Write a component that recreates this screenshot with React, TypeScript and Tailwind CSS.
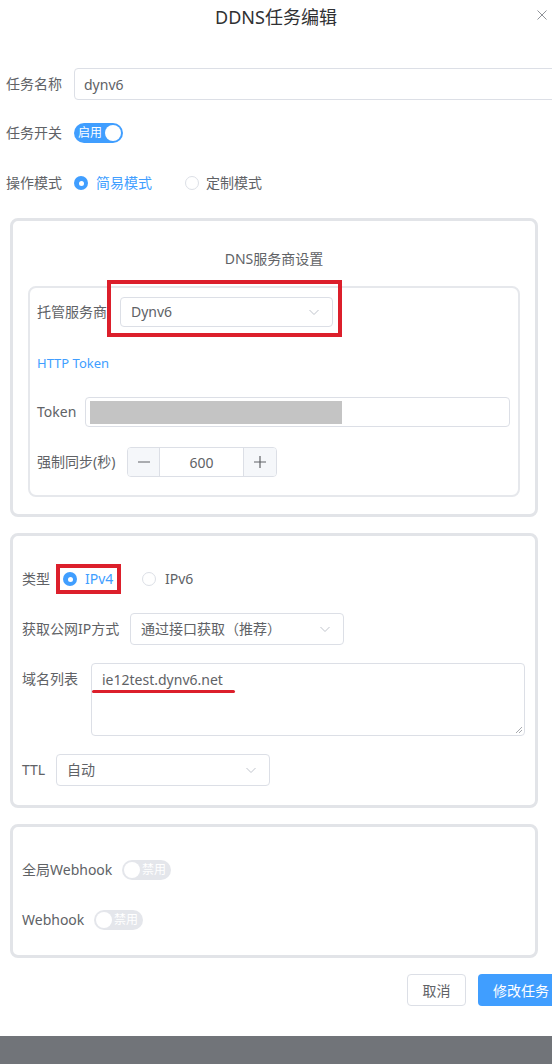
import React from "react";

const Chevron = () => (
  <svg width="12" height="12" viewBox="0 0 12 12" className="flex-none">
    <polyline points="1.5,4 6,8.5 10.5,4" fill="none" stroke="#c0c4cc" strokeWidth="1" />
  </svg>
);

const Radio = ({ checked }: { checked?: boolean }) =>
  checked ? (
    <span className="flex h-[14px] w-[14px] flex-none items-center justify-center rounded-full bg-[#409eff]">
      <span className="block h-[5px] w-[5px] rounded-full bg-white" />
    </span>
  ) : (
    <span className="block h-[14px] w-[14px] flex-none rounded-full border border-[#dcdfe6] bg-white" />
  );

const Toggle = ({ on, text }: { on?: boolean; text: string }) =>
  on ? (
    <span className="flex h-[20px] w-[49px] flex-none items-center justify-between rounded-full bg-[#409eff] pl-[4px] pr-[2px]">
      <span className="text-[12px] leading-[20px] text-white">{text}</span>
      <span className="block h-[16px] w-[16px] rounded-full bg-white" />
    </span>
  ) : (
    <span className="flex h-[20px] w-[49px] flex-none items-center justify-between rounded-full bg-[#e4e6eb] pl-[2px] pr-[5px]">
      <span className="block h-[16px] w-[16px] rounded-full bg-white" />
      <span className="text-[12px] leading-[20px] text-white">{text}</span>
    </span>
  );

const Select = ({ text, w, h = 32 }: { text: string; w: string; h?: number }) => (
  <div
    className={`flex flex-none items-center justify-between rounded-[4px] border border-[#dcdfe6] bg-white pl-[10px] pr-[12px] text-[14px] text-[#606266] ${w} ${
      h === 30 ? "h-[30px]" : "h-[32px]"
    }`}
  >
    <span className="leading-[20px]">{text}</span>
    <Chevron />
  </div>
);

export default function App() {
  return (
    <div className="flex h-[1064px] w-[552px] flex-col overflow-hidden bg-white font-['Noto_Sans','Noto_Sans_CJK_SC',sans-serif] text-[#606266]">
      {/* header */}
      <div className="grid h-[36px] grid-cols-[40px_1fr_40px]">
        <div />
        <div className="pt-[5px] text-center text-[18px] leading-[24px] text-[#303133]">DDNS任务编辑</div>
        <div className="pl-[25px] pt-[10px]">
          <svg width="10" height="10" viewBox="0 0 10 10">
            <path d="M0.5 0.5 L9.5 9.5 M9.5 0.5 L0.5 9.5" stroke="#909399" strokeWidth="1" />
          </svg>
        </div>
      </div>

      {/* top form */}
      <div className="flex flex-col pl-[6px]">
        <div className="mt-[32px] flex h-[32px] items-center">
          <span className="w-[68px] flex-none text-[14px] leading-[20px]">任务名称</span>
          <div className="flex h-[32px] w-[560px] flex-none items-center rounded-[4px] border border-[#dcdfe6] pl-[9px] text-[14px]">
            dynv6
          </div>
        </div>
        <div className="mt-[17px] flex h-[32px] items-center">
          <span className="w-[68px] flex-none text-[14px] leading-[20px]">任务开关</span>
          <Toggle on text="启用" />
        </div>
        <div className="mt-[18px] flex h-[32px] items-center">
          <span className="w-[68px] flex-none text-[14px] leading-[20px]">操作模式</span>
          <Radio checked />
          <span className="ml-[8px] text-[14px] leading-[20px] text-[#409eff]">简易模式</span>
          <span className="ml-[33px] block">
            <Radio />
          </span>
          <span className="ml-[7px] text-[14px] leading-[20px]">定制模式</span>
        </div>
      </div>

      {/* card 1 */}
      <div className="ml-[10px] mt-[19px] w-[528px] rounded-[8px] border-[3px] border-[#e2e4e8] pb-[17px] pt-[28px]">
        <div className="text-center text-[14px] leading-[20px]">DNS服务商设置</div>
        <div className="mx-[15px] mt-[17px] rounded-[8px] border-2 border-[#e6e8ec] pb-[18px] pl-[7px] pt-[9px]">
          <div className="flex h-[30px] items-center">
            <span className="w-[83px] flex-none text-[14px] leading-[20px]">托管服务商</span>
            <div className="relative">
              <Select text="Dynv6" w="w-[213px]" h={30} />
              <div className="pointer-events-none absolute bottom-[-10px] left-[-13px] right-[-9px] top-[-17px] border-[4px] border-[#dc1f2b]" />
            </div>
          </div>
          <div className="mt-[26px] text-[13px] leading-[20px] text-[#409eff]">HTTP Token</div>
          <div className="mt-[24px] flex h-[30px] items-center">
            <span className="w-[48px] flex-none text-[14px] leading-[20px]">Token</span>
            <div className="flex h-[30px] w-[425px] flex-none items-center rounded-[4px] border border-[#dcdfe6] pl-[4px]">
              <div className="h-[23px] w-[252px] bg-[#c4c4c4]" />
            </div>
          </div>
          <div className="mt-[20px] flex h-[30px] items-center">
            <span className="w-[90px] flex-none text-[14px] leading-[20px]">强制同步(秒)</span>
            <div className="flex h-[30px] w-[150px] flex-none overflow-hidden rounded-[4px] border border-[#dcdfe6]">
              <div className="flex w-[32px] flex-none items-center justify-center border-r border-[#dcdfe6] bg-[#f5f7fa]">
                <svg width="12" height="12" viewBox="0 0 12 12">
                  <path d="M0 6 H12" stroke="#606266" strokeWidth="1.2" />
                </svg>
              </div>
              <div className="flex flex-1 items-center justify-center text-[14px]">600</div>
              <div className="flex w-[33px] flex-none items-center justify-center border-l border-[#dcdfe6] bg-[#f5f7fa]">
                <svg width="12" height="12" viewBox="0 0 12 12">
                  <path d="M0 6 H12 M6 0 V12" stroke="#606266" strokeWidth="1.2" />
                </svg>
              </div>
            </div>
          </div>
        </div>
      </div>

      {/* card 2 */}
      <div className="ml-[10px] mt-[16px] w-[528px] rounded-[8px] border-[3px] border-[#e2e4e8] pb-[19px] pl-[9px] pt-[28px]">
        <div className="flex h-[30px] items-center">
          <span className="w-[34px] flex-none text-[14px] leading-[20px]">类型</span>
          <div className="flex h-[30px] w-[65px] flex-none items-center border-[4px] border-[#dc1f2b] pl-[3px]">
            <Radio checked />
            <span className="ml-[8px] text-[14px] leading-[20px] text-[#409eff]">IPv4</span>
          </div>
          <span className="ml-[21px] block">
            <Radio />
          </span>
          <span className="ml-[9px] text-[14px] leading-[20px]">IPv6</span>
        </div>
        <div className="mt-[19px] flex h-[32px] items-center">
          <span className="w-[108px] flex-none text-[14px] leading-[20px]">获取公网IP方式</span>
          <Select text="通过接口获取（推荐）" w="w-[214px]" />
        </div>
        <div className="mt-[18px] flex">
          <span className="w-[69px] flex-none pt-[6px] text-[14px] leading-[20px]">域名列表</span>
          <div className="relative h-[73px] w-[434px] flex-none rounded-[4px] border border-[#dcdfe6] pl-[10px] pt-[6px] text-[14px] leading-[20px]">
            ie12test.dynv6.net
            <div className="absolute left-[0px] top-[26px] h-[3px] w-[143px] rounded-full bg-[#dc1f2b]" />
            <svg className="absolute bottom-[1px] right-[1px]" width="8" height="8" viewBox="0 0 8 8">
              <path d="M1 7 L7 1 M4 7 L7 4" stroke="#909399" strokeWidth="0.8" />
            </svg>
          </div>
        </div>
        <div className="mt-[18px] flex h-[32px] items-center">
          <span className="w-[34px] flex-none text-[14px] leading-[20px]">TTL</span>
          <Select text="自动" w="w-[214px]" />
        </div>
      </div>

      {/* card 3 */}
      <div className="ml-[10px] mt-[16px] w-[528px] rounded-[8px] border-[3px] border-[#e2e4e8] pb-[25px] pl-[9px] pt-[33px]">
        <div className="flex h-[20px] items-center">
          <span className="w-[100px] flex-none text-[14px] leading-[20px]">全局Webhook</span>
          <Toggle text="禁用" />
        </div>
        <div className="mt-[30px] flex h-[20px] items-center">
          <span className="w-[72px] flex-none text-[14px] leading-[20px]">Webhook</span>
          <Toggle text="禁用" />
        </div>
      </div>

      {/* buttons */}
      <div className="mt-[16px] flex pl-[407px]">
        <div className="flex h-[32px] w-[59px] flex-none items-center justify-center rounded-[4px] border border-[#dcdfe6] text-[14px]">
          取消
        </div>
        <div className="ml-[12px] flex h-[32px] w-[90px] flex-none items-center rounded-[4px] bg-[#409eff] pl-[15px] text-[14px] text-white">
          修改任务
        </div>
      </div>

      <div className="mt-auto h-[28px] w-full bg-[#717479]" />
    </div>
  );
}
